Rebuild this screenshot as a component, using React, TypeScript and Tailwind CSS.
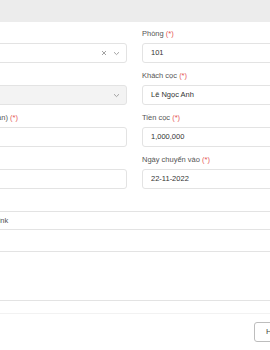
import React from "react";

const font = { fontFamily: '"Liberation Sans", Arial, sans-serif' };

function Label({ text }: { text: string }) {
  return (
    <div className="h-[12px] mb-[3px] text-[7.5px] leading-[12px] text-[#555] whitespace-nowrap">
      {text} <span className="text-[#e55353]">(*)</span>
    </div>
  );
}

function Input({ value, disabled }: { value?: string; disabled?: boolean }) {
  return (
    <div
      className={`h-[20px] border border-[#e3e3e3] rounded-[3px] pl-[8px] flex items-center text-[7.5px] text-[#333] ${
        disabled ? "bg-[#f3f3f3]" : "bg-white"
      }`}
    >
      {value}
    </div>
  );
}

function Chevron() {
  return (
    <svg width="7" height="5" viewBox="0 0 7 5" className="block">
      <path d="M1 1.2 L3.5 3.6 L6 1.2" fill="none" stroke="#999" strokeWidth="0.9" />
    </svg>
  );
}

function Select({ clear, disabled }: { clear?: boolean; disabled?: boolean }) {
  return (
    <div
      className={`h-[20px] border border-[#e3e3e3] rounded-[3px] flex items-center justify-end pr-[6px] gap-[6px] ${
        disabled ? "bg-[#f3f3f3]" : "bg-white"
      }`}
    >
      {clear && (
        <svg width="6" height="6" viewBox="0 0 6 6" className="block">
          <path d="M1 1 L5 5 M5 1 L1 5" stroke="#999" strokeWidth="0.9" />
        </svg>
      )}
      <Chevron />
    </div>
  );
}

function Field({ label, children, last }: { label: string; children: React.ReactNode; last?: boolean }) {
  return (
    <div className={last ? "" : "mb-[7px]"}>
      <Label text={label} />
      {children}
    </div>
  );
}

export default function App() {
  return (
    <div className="w-[270px] h-[350px] overflow-hidden bg-white relative" style={font}>
      <div className="h-[22px] bg-[#ececec]" />
      <div className="ml-[-61px] w-[391px] pt-[6px]">
        <div className="grid grid-cols-[188px_188px] gap-x-[15px]">
          <div>
            <Field label="Tòa nhà">
              <Select clear />
            </Field>
            <Field label="Loại phòng">
              <Select disabled />
            </Field>
            <Field label="Tiền thuê (tháng/lần)">
              <Input />
            </Field>
            <Field label="Ngày hết hạn" last>
              <Input />
            </Field>
          </div>
          <div>
            <Field label="Phòng">
              <Input value="101" />
            </Field>
            <Field label="Khách cọc">
              <Input value="Lê Ngọc Anh" />
            </Field>
            <Field label="Tiền cọc">
              <Input value="1,000,000" />
            </Field>
            <Field label="Ngày chuyển vào" last>
              <Input value="22-11-2022" />
            </Field>
          </div>
        </div>
        <div className="mt-[22px] h-[19px] border-t border-b border-[#e3e3e3] flex items-center pl-[23px] text-[7.5px] text-[#555] whitespace-nowrap">
          Facebook link
        </div>
        <div className="mt-[21px] h-[50px] border-t border-b border-[#e3e3e3]" />
      </div>
      <div className="mt-[12px] border-t border-[#f2f2f2]" />
      <div className="flex justify-start pl-[254px] pt-[8px]">
        <div className="h-[20px] w-[50px] shrink-0 border border-[#bdbdbd] rounded-[3px] bg-white flex items-center pl-[11px] text-[8px] text-[#444]">
          Hủy
        </div>
      </div>
    </div>
  );
}
